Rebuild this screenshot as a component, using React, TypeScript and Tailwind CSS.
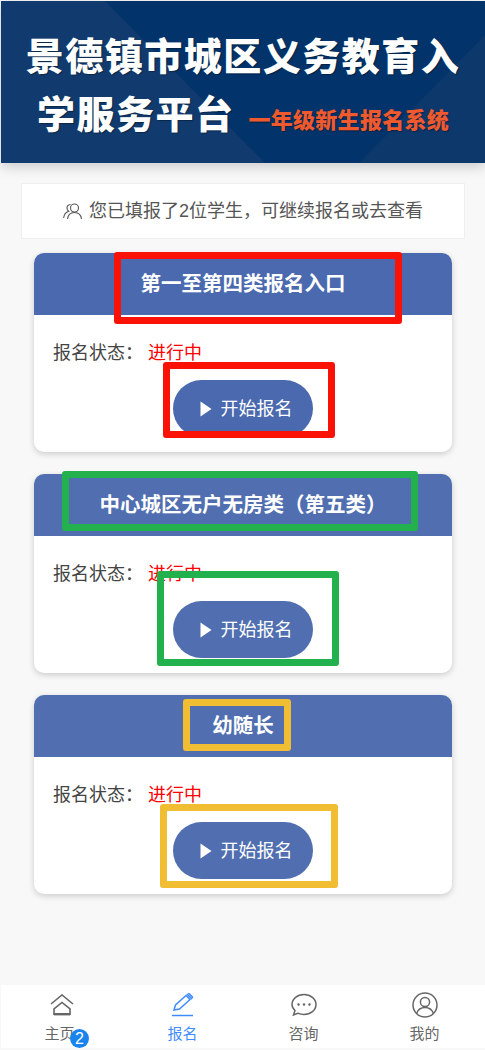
const FONT = "font-['Liberation_Sans','Noto_Sans_CJK_SC',sans-serif]";

type Box = { className: string };

const entries: {
    title: string;
    headClass: string;
    btnClass: string;
    cardClass: string;
    boxes: Box[];
}[] = [
    {
        title: "第一至第四类报名入口",
        headClass: "bg-[#4a69af]",
        btnClass: "bg-[#4a69af]",
        cardClass: "mt-[14px]",
        boxes: [
            { className: "left-[80px] top-[-1px] w-[288px] h-[72px] border-[#fb1207]" },
            { className: "left-[129px] top-[109px] w-[172px] h-[76px] border-[#fb1207]" },
        ],
    },
    {
        title: "中心城区无户无房类（第五类）",
        headClass: "bg-[#516fb0]",
        btnClass: "bg-[#516fb0]",
        cardClass: "mt-[22px]",
        boxes: [
            { className: "left-[28px] top-[-3px] w-[356px] h-[60px] border-[#22b14c]" },
            { className: "left-[123px] top-[97px] w-[182px] h-[95px] border-[#22b14c]" },
        ],
    },
    {
        title: "幼随长",
        headClass: "bg-[#516fb0]",
        btnClass: "bg-[#516fb0]",
        cardClass: "mt-[22px]",
        boxes: [
            { className: "left-[149px] top-[4px] w-[108px] h-[52px] border-[#f1bd33]" },
            { className: "left-[126px] top-[109px] w-[178px] h-[84px] border-[#f1bd33]" },
        ],
    },
];

function Entry({ title, headClass, btnClass, cardClass, boxes }: (typeof entries)[number]) {
    return (
        <div className={`relative h-[199px] mx-[34px] w-[418px] bg-white rounded-[10px] shadow-[0_2px_6px_rgba(0,0,0,0.18)] ${cardClass}`}>
            <div className={`h-[62px] rounded-t-[10px] flex items-center justify-center text-white text-[20.5px] font-bold ${headClass}`}>
                {title}
            </div>
            <div className="pl-[19px] pt-[25px] flex text-[18px] leading-[26px] text-[#444]">
                <span className="w-[95px]">报名状态：</span>
                <span className="text-[#ff0000]">进行中</span>
            </div>
            <div className="mt-[14px] flex justify-center">
                <div className={`w-[140px] h-[57px] rounded-full pl-[6px] flex items-center justify-center gap-[9px] text-white text-[18px] ${btnClass}`}>
                    <svg width="12" height="16" viewBox="0 0 12 16">
                        <path d="M0.5 0.5 L11.5 8 L0.5 15.5 Z" fill="#fff" />
                    </svg>
                    <span className="pt-[1px]">开始报名</span>
                </div>
            </div>
            {boxes.map((b, i) => (
                <div key={i} className={`absolute border-[7px] rounded-[3px] ${b.className}`} />
            ))}
        </div>
    );
}

function NavItem({ label, active, icon, labelClass }: { label: string; active?: boolean; icon: React.ReactNode; labelClass?: string }) {
    return (
        <div className={`relative flex-1 flex flex-col items-center text-[15px] leading-[20px] ${active ? "text-[#3f8cff]" : "text-[#666]"}`}>
            <div className="h-[28px] flex items-center justify-center mb-[5px]">{icon}</div>
            <span className={labelClass}>{label}</span>
        </div>
    );
}

export default function App() {
    return (
        <div className={`w-[485px] h-[1050px] flex flex-col bg-[#f8f8f8] overflow-hidden ${FONT}`}>
            <div className="relative ml-px mt-px h-[162px] bg-[#02336a] shadow-[0_4px_12px_rgba(0,0,0,0.18)] flex items-center justify-center overflow-hidden">
                <svg className="absolute inset-0" width="484" height="162" viewBox="0 0 484 162">
                    <path d="M0 0 H104 L264 162 H0 Z" fill="#113b6e" />
                    <path d="M358 162 L484 34 V162 Z" fill="#0c386c" />
                </svg>
                <div className="relative w-[440px] text-center text-white text-[38px] leading-[58px] font-black tracking-[1.5px] pt-[14px] [text-shadow:1px_1px_1px_rgba(0,0,0,0.35)]">
                    景德镇市城区义务教育入学服务平台
                    <span className="ml-[14px] text-[22px] font-black tracking-[0.3px] text-[#ee5a2e]">一年级新生报名系统</span>
                </div>
            </div>

            <div className="flex-1">
                <div className="mt-[20px] mx-[21px] w-[444px] h-[56px] pt-[1px] bg-white border border-[#efefef] flex items-center justify-center gap-[7px] text-[18px] text-[#555]">
                    <svg width="19" height="17" viewBox="0 0 19 17" fill="none" stroke="#555" strokeWidth="1.1">
                        <circle cx="11.5" cy="5" r="4" />
                        <path d="M4.5 16 C5 11.5 8 9.5 11.5 9.5 C15 9.5 18 11.5 18.5 16" />
                        <path d="M7.5 1.5 C5 1.8 4 3.5 4 5 C4 6.5 4.7 7.6 5.7 8.3 C3 9.2 1 11.6 0.6 15" />
                    </svg>
                    <span>您已填报了2位学生，可继续报名或去查看</span>
                </div>
                {entries.map((e) => (
                    <Entry key={e.title} {...e} />
                ))}
            </div>

            <div className="relative ml-px h-[63px] mb-[2px] bg-white flex pt-[6px]">
                <NavItem
                    label="主页"
                    labelClass="mr-[4px]"
                    icon={
                        <svg width="24" height="22" viewBox="0 0 24 22" fill="none" stroke="#666" strokeWidth="1.6">
                            <path d="M1 10 L12 1 L23 10" />
                            <path d="M4 20.2 V15 L12 8.5 L20 15 V20.2 Z" />
                            <path d="M4 20.2 H20" strokeWidth="2.4" />
                        </svg>
                    }
                />
                <NavItem
                    label="报名"
                    active
                    icon={
                        <svg width="24" height="24" viewBox="0 0 24 24" fill="none" stroke="#3f8cff" strokeWidth="1.5">
                            <path d="M3 17 L4.5 12 L15 2.5 L19 6.5 L8.5 16 Z" />
                            <path d="M16.5 1.5 L18 0.5 L21.5 4 L20.5 5.5 Z" />
                            <path d="M1 22.5 H22" />
                        </svg>
                    }
                />
                <NavItem
                    label="咨询"
                    icon={
                        <svg width="26" height="24" viewBox="0 0 26 24" fill="none" stroke="#666" strokeWidth="1.5">
                            <path d="M2.5 22 L4 17.5 C2 15.8 1 13.8 1 11.5 C1 5.8 6.4 1.5 13 1.5 C19.6 1.5 25 5.8 25 11.5 C25 17.2 19.6 21.5 13 21.5 C10.5 21.5 8.4 21 6.8 20.2 Z" />
                            <circle cx="7.5" cy="11.5" r="1.2" fill="#666" stroke="none" />
                            <circle cx="13" cy="11.5" r="1.2" fill="#666" stroke="none" />
                            <circle cx="18.5" cy="11.5" r="1.2" fill="#666" stroke="none" />
                        </svg>
                    }
                />
                <NavItem
                    label="我的"
                    icon={
                        <svg width="26" height="26" viewBox="0 0 26 26" fill="none" stroke="#666" strokeWidth="1.5">
                            <circle cx="13" cy="13" r="12" />
                            <circle cx="13" cy="10" r="4.6" />
                            <path d="M4.5 21.5 C6 17.5 9 15.5 13 15.5 C17 15.5 20 17.5 21.5 21.5" />
                        </svg>
                    }
                />
                <div className="absolute left-[69px] top-[44px] w-[19px] h-[19px] rounded-full bg-[#1a84ee] text-white text-[16px] leading-[19px] text-center">
                    2
                </div>
            </div>
        </div>
    );
}
